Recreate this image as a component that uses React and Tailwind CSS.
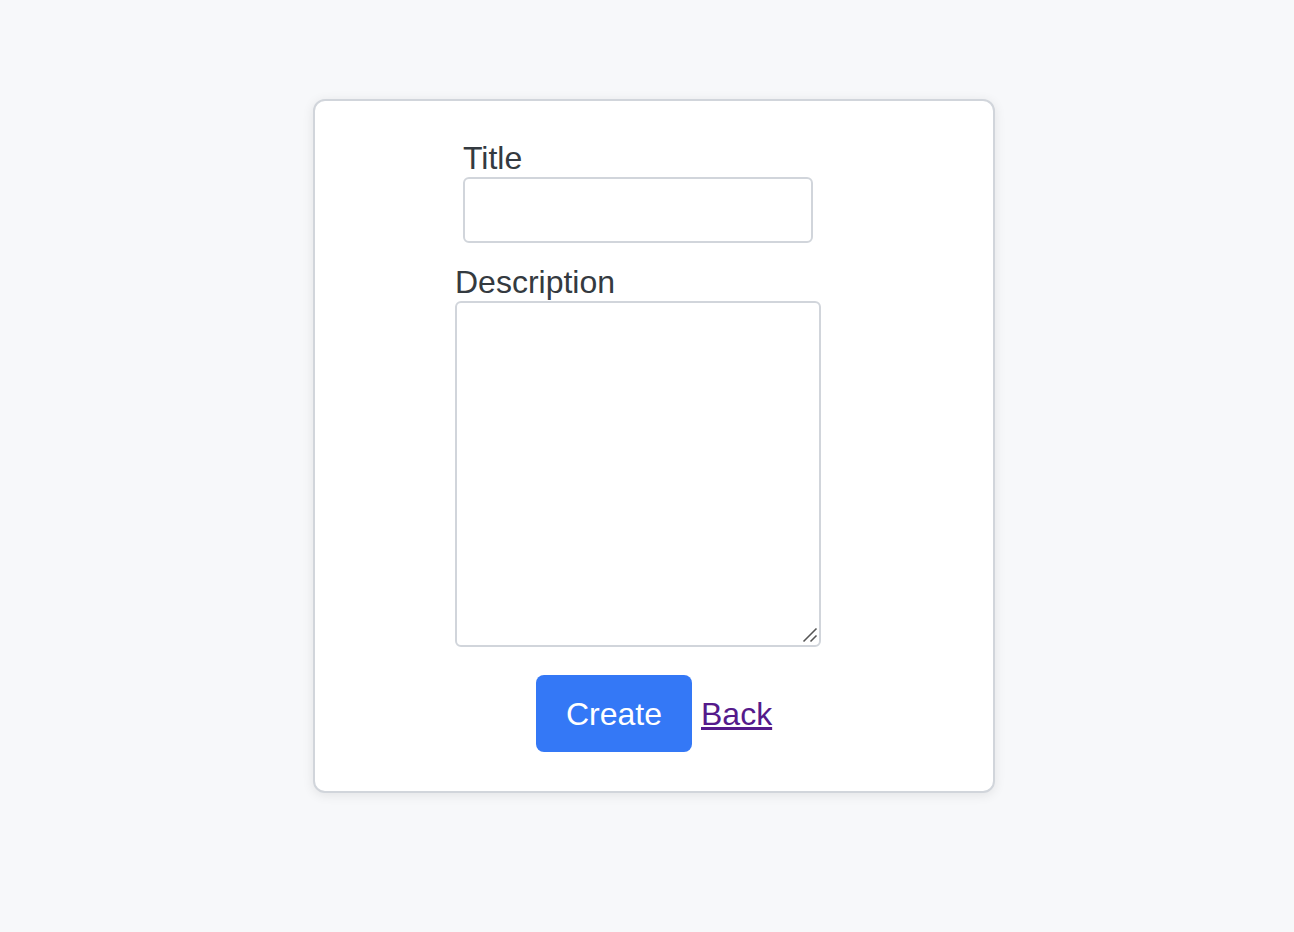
export default function App() {
  return (
    <div
      className="min-h-screen bg-[#f7f8fa] pt-[99px] pl-[313px]"
      style={{ fontFamily: '"Liberation Sans", Arial, sans-serif' }}
    >
      <div className="w-[682px] h-[694px] bg-white border-2 border-[#d1d5db] rounded-[12px] shadow-[0_2px_12px_rgba(0,0,0,0.09)]">
        <div className="pt-[39px] pl-[148px]">
          <label className="block text-[32px] leading-[36px] text-[#343a40]">Title</label>
          <input
            type="text"
            className="block mt-[1px] w-[350px] h-[66px] border-2 border-[#d1d5db] rounded-[6px] bg-white outline-none"
          />
        </div>
        <div className="mt-[21px] pl-[140px]">
          <label className="block text-[32px] leading-[36px] text-[#343a40]">Description</label>
          <div className="relative mt-[1px] w-[366px] h-[346px]">
            <textarea className="block w-full h-full resize-none border-2 border-[#d1d5db] rounded-[6px] bg-white outline-none" />
            <svg
              className="absolute right-[3px] bottom-[4px] pointer-events-none"
              width="16"
              height="16"
              viewBox="0 0 16 16"
            >
              <line x1="1.5" y1="14.5" x2="14.5" y2="1.5" stroke="#555" strokeWidth="1.6" />
              <line x1="8.5" y1="14.5" x2="14.5" y2="8.5" stroke="#555" strokeWidth="1.6" />
            </svg>
          </div>
        </div>
        <div className="mt-[28px] pl-[221px] flex items-center gap-[9px]">
          <button className="w-[156px] h-[77px] rounded-[8px] bg-[#3478f6] text-white text-[32px] leading-[36px]">
            Create
          </button>
          <a href="#" className="text-[32px] leading-[36px] text-[#551a8b] underline">
            Back
          </a>
        </div>
      </div>
    </div>
  );
}
